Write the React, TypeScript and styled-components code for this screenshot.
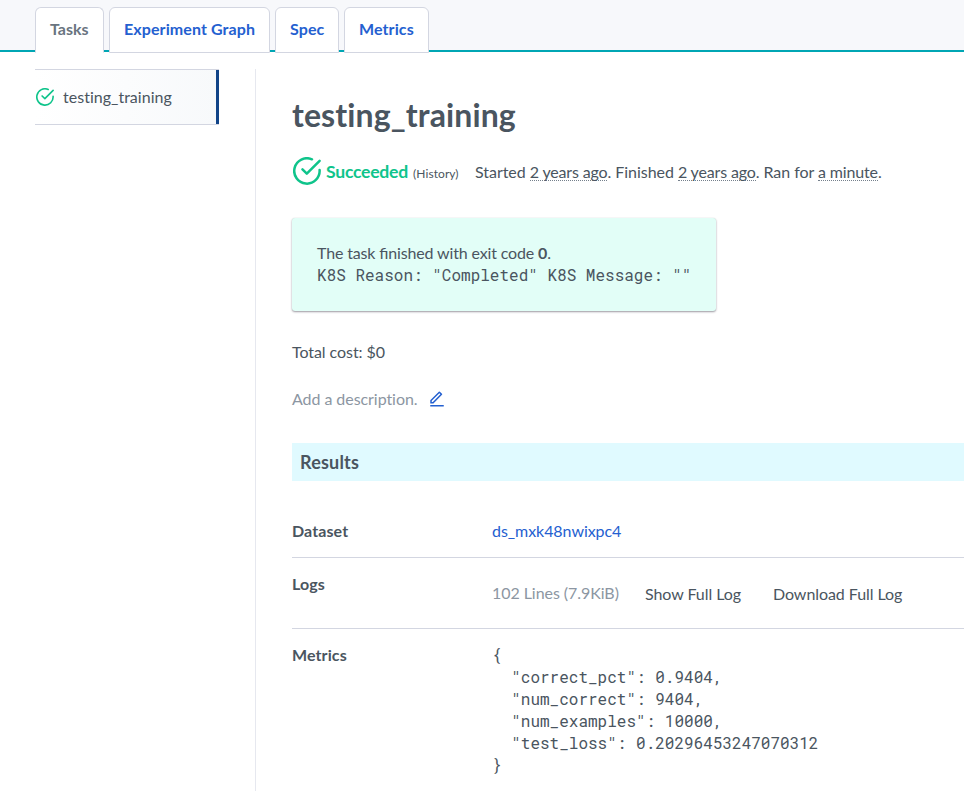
import React from "react";
import styled, { createGlobalStyle, css } from "styled-components";

const GlobalStyle = createGlobalStyle`
  * { box-sizing: border-box; }
  body {
    margin: 0;
    height: 791px;
    overflow: hidden;
    background: #fff;
    color: #4a5560;
    font: 16px/22px Lato, "Liberation Sans", sans-serif;
    font-variant-ligatures: none;
    letter-spacing: -0.06px;
  }
  a { color: inherit; text-decoration: none; }
`;

const Page = styled.div`
  height: 791px;
  overflow: hidden;
`;

const TabBar = styled.nav`
  display: flex;
  align-items: flex-start;
  gap: 5px;
  height: 52px;
  padding: 7px 0 0 35px;
  background: linear-gradient(to bottom, #f7f8fb 50px, #00a6b4 50px, #00a6b4 52px);
`;

const Tab = styled.a<{ $active?: boolean; $width: number }>`
  flex: none;
  width: ${(p) => p.$width}px;
  height: 46px;
  padding: 10px 0 0 14px;
  border: 1px solid #d3d6e1;
  border-radius: 6px 6px 0 0;
  background: #fff;
  color: #2460d0;
  font-weight: 700;
  letter-spacing: 0.1px;
  white-space: nowrap;
  ${(p) =>
    p.$active &&
    css`
      border-bottom-color: #fff;
      color: #697480;
      letter-spacing: 0;
    `}
`;

const Body = styled.div`
  display: flex;
  height: 739px;
`;

const Sidebar = styled.aside`
  flex: none;
  width: 221px;
  margin: 17px 0 0 35px;
  border-right: 1px solid #e6e8ef;
`;

const TaskItem = styled.a`
  display: flex;
  align-items: center;
  gap: 9px;
  width: 184px;
  height: 56px;
  padding-left: 1px;
  border: solid #d3d6e1;
  border-width: 1px 0;
  background: linear-gradient(to left, #114488 3px, transparent 3px) border-box,
    linear-gradient(to right, #fff, #f7f9fb);
  letter-spacing: 0.02px;
`;

const Content = styled.main`
  flex: 1;
  min-width: 0;
  padding: 41px 0 0 36px;
`;

const Title = styled.h1`
  margin: 0;
  font-size: 32px;
  line-height: 44px;
  font-weight: 700;
  letter-spacing: 0.12px;
`;

const StatusRow = styled.div`
  display: flex;
  align-items: center;
  height: 30px;
  margin-top: 19px;
  padding-left: 1px;
  white-space: nowrap;
`;

const StatusLabel = styled.strong`
  width: 92px;
  padding: 2px 0 0 5px;
  color: #0fc48b;
  font-size: 17.6px;
  letter-spacing: -0.25px;
`;

const History = styled.a`
  width: 57px;
  margin-top: 5px;
  font-size: 12px;
  letter-spacing: 0.08px;
`;

const Timing = styled.span`
  padding: 2px 0 0 5px;
  letter-spacing: -0.04px;
`;

const Term = styled.span`
  display: inline-block;
  height: 20px;
  line-height: 22px;
  border-bottom: 1px dotted #75808c;
  letter-spacing: -0.15px;
`;

const ResultBox = styled.section`
  width: 424px;
  height: 93px;
  margin-top: 32px;
  padding: 24px 25px;
  border-radius: 3px;
  background: #e2fef7;
  box-shadow: 0 1px 2px rgba(40, 30, 50, 0.45), 0 0 1px rgba(40, 30, 50, 0.15);
`;

const ExitMessage = styled.div`
  letter-spacing: -0.15px;
`;

const Ligated = styled.span`
  font-feature-settings: "liga" 1;
`;

const Code = styled.pre`
  margin: 0;
  font: 16px/22px "Roboto Mono", "Liberation Mono", monospace;
  letter-spacing: 0;
`;

const Cost = styled.p`
  margin: 30px 0 0;
`;

const Description = styled.div`
  display: flex;
  align-items: center;
  width: 154px;
  justify-content: space-between;
  margin-top: 25px;
  color: #8c96a2;
`;

const SectionTitle = styled.h2`
  height: 38px;
  margin: 33px 0 24px;
  padding: 0 8px;
  background: #e0faff;
  font-size: 18px;
  line-height: 38px;
  font-weight: 700;
  letter-spacing: 0.2px;
`;

const Row = styled.div<{ $height: number }>`
  display: grid;
  grid-template-columns: 200px 1fr;
  height: ${(p) => p.$height}px;
  padding-top: 15px;
  border-bottom: 1px solid #d3d6e1;
`;

const RowLabel = styled.strong`
  letter-spacing: 0.1px;
`;

const DatasetLink = styled.a`
  color: #2460d0;
`;

const LogActions = styled.div`
  display: flex;
  padding-top: 10px;
  white-space: nowrap;
`;

const LogInfo = styled.span`
  width: 153px;
  margin-top: -1px;
  color: #8c96a2;
`;

const LogButton = styled.a`
  margin-right: 32px;
`;

function CheckIcon({ size }: { size: number }) {
  return (
    <svg width={size} height={size} viewBox="0 0 28 28" fill="none" stroke="#0fc48b" strokeWidth="2.5" strokeLinecap="round" strokeLinejoin="round">
      <path d="M19 2.3A12.7 12.7 0 1 0 26.6 13" />
      <path d="M9.5 12.4l4.3 4.2L26.6 3.8" />
    </svg>
  );
}

function EditIcon() {
  return (
    <svg width="18" height="18" viewBox="0 0 24 24" fill="#2460d0">
      <path d="M6.414 15.89 16.556 5.748l-1.414-1.414L5 14.476v1.414h1.414zm.829 2H3v-4.243L14.435 2.212a1 1 0 0 1 1.414 0l2.829 2.829a1 1 0 0 1 0 1.414L7.243 17.89zM3 19.89h18v2H3v-2z" />
    </svg>
  );
}

const tabs = [
  { label: "Tasks", width: 69, active: true },
  { label: "Experiment Graph", width: 161 },
  { label: "Spec", width: 64 },
  { label: "Metrics", width: 85 },
];

const metrics = `{
  "correct_pct": 0.9404,
  "num_correct": 9404,
  "num_examples": 10000,
  "test_loss": 0.20296453247070312
}`;

export default function App() {
  return (
    <Page>
      <GlobalStyle />
      <TabBar>
        {tabs.map((t) => (
          <Tab key={t.label} $width={t.width} $active={t.active}>{t.label}</Tab>
        ))}
      </TabBar>
      <Body>
        <Sidebar>
          <TaskItem>
            <CheckIcon size={18} />
            <span>testing_training</span>
          </TaskItem>
        </Sidebar>
        <Content>
          <Title>testing_training</Title>
          <StatusRow>
            <CheckIcon size={28} />
            <StatusLabel>Succeeded</StatusLabel>
            <History>(History)</History>
            <Timing>
              Started <Term>2 years ago</Term>. Finished <Term>2 years ago</Term>. Ran for <Term>a minute</Term>.
            </Timing>
          </StatusRow>
          <ResultBox>
            <ExitMessage>The task <Ligated>finished</Ligated> with exit code <strong>0</strong>.</ExitMessage>
            <Code>K8S Reason: "Completed" K8S Message: ""</Code>
          </ResultBox>
          <Cost>Total cost: $0</Cost>
          <Description>
            <span>Add a description.</span>
            <EditIcon />
          </Description>
          <SectionTitle>Results</SectionTitle>
          <Row $height={53}>
            <RowLabel>Dataset</RowLabel>
            <DatasetLink>ds_mxk48nwixpc4</DatasetLink>
          </Row>
          <Row $height={71}>
            <RowLabel>Logs</RowLabel>
            <LogActions>
              <LogInfo>102 Lines (7.9KiB)</LogInfo>
              <LogButton>Show Full Log</LogButton>
              <LogButton>Download Full Log</LogButton>
            </LogActions>
          </Row>
          <Row $height={180}>
            <RowLabel>Metrics</RowLabel>
            <Code>{metrics}</Code>
          </Row>
        </Content>
      </Body>
    </Page>
  );
}
